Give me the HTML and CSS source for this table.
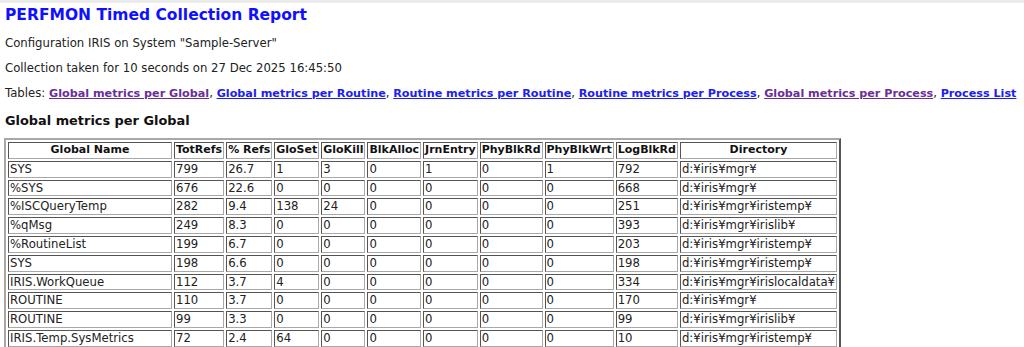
FILE: index.html
```html
<!DOCTYPE html>
<html>
<head>
<meta charset="utf-8">
<title>PERFMON Timed Collection Report</title>
<link rel="stylesheet" href="styles.css">
</head>
<body>
<div class="topbar"></div>
<div class="page">
<h1 class="title">PERFMON Timed Collection Report</h1>
<p class="line">Configuration IRIS on System "Sample-Server"</p>
<p class="line">Collection taken for 10 seconds on 27 Dec 2025 16:45:50</p>
<p class="line">Tables: <a class="lnk visited" href="#g">Global metrics per Global</a>, <a class="lnk" href="#gr">Global metrics per Routine</a>, <a class="lnk" href="#rr">Routine metrics per Routine</a>, <a class="lnk" href="#rp">Routine metrics per Process</a>, <a class="lnk visited" href="#gp">Global metrics per Process</a>, <a class="lnk" href="#pl">Process List</a></p>
<h2 class="section" id="g">Global metrics per Global</h2>
<table class="report">
<thead>
<tr><th class="c-name">Global Name</th><th>TotRefs</th><th>% Refs</th><th>GloSet</th><th>GloKill</th><th>BlkAlloc</th><th>JrnEntry</th><th>PhyBlkRd</th><th>PhyBlkWrt</th><th>LogBlkRd</th><th>Directory</th></tr>
</thead>
<tbody>
<tr><td>SYS</td><td>799</td><td>26.7</td><td>1</td><td>3</td><td>0</td><td>1</td><td>0</td><td>1</td><td>792</td><td>d:¥iris¥mgr¥</td></tr>
<tr><td>%SYS</td><td>676</td><td>22.6</td><td>0</td><td>0</td><td>0</td><td>0</td><td>0</td><td>0</td><td>668</td><td>d:¥iris¥mgr¥</td></tr>
<tr><td>%ISCQueryTemp</td><td>282</td><td>9.4</td><td>138</td><td>24</td><td>0</td><td>0</td><td>0</td><td>0</td><td>251</td><td>d:¥iris¥mgr¥iristemp¥</td></tr>
<tr><td>%qMsg</td><td>249</td><td>8.3</td><td>0</td><td>0</td><td>0</td><td>0</td><td>0</td><td>0</td><td>393</td><td>d:¥iris¥mgr¥irislib¥</td></tr>
<tr><td>%RoutineList</td><td>199</td><td>6.7</td><td>0</td><td>0</td><td>0</td><td>0</td><td>0</td><td>0</td><td>203</td><td>d:¥iris¥mgr¥iristemp¥</td></tr>
<tr><td>SYS</td><td>198</td><td>6.6</td><td>0</td><td>0</td><td>0</td><td>0</td><td>0</td><td>0</td><td>198</td><td>d:¥iris¥mgr¥iristemp¥</td></tr>
<tr><td>IRIS.WorkQueue</td><td>112</td><td>3.7</td><td>4</td><td>0</td><td>0</td><td>0</td><td>0</td><td>0</td><td>334</td><td>d:¥iris¥mgr¥irislocaldata¥</td></tr>
<tr><td>ROUTINE</td><td>110</td><td>3.7</td><td>0</td><td>0</td><td>0</td><td>0</td><td>0</td><td>0</td><td>170</td><td>d:¥iris¥mgr¥</td></tr>
<tr><td>ROUTINE</td><td>99</td><td>3.3</td><td>0</td><td>0</td><td>0</td><td>0</td><td>0</td><td>0</td><td>99</td><td>d:¥iris¥mgr¥irislib¥</td></tr>
<tr><td>IRIS.Temp.SysMetrics</td><td>72</td><td>2.4</td><td>64</td><td>0</td><td>0</td><td>0</td><td>0</td><td>0</td><td>10</td><td>d:¥iris¥mgr¥iristemp¥</td></tr>
</tbody>
</table>
</div>
</body>
</html>
```

FILE: styles.css
```css
html, body {
  margin: 0;
  padding: 0;
  background: #ffffff;
}
body {
  font-family: "DejaVu Sans", Verdana, sans-serif;
  font-size: 11.7px;
  color: #222222;
}
.topbar {
  height: 3px;
  background: #ececec;
}
.page {
  padding: 0 5px;
}
.title {
  margin: 3px 0 0 0;
  font-size: 15.5px;
  line-height: 19px;
  font-weight: bold;
  color: #1010ff;
}
.line {
  margin: 11px 0 0 0;
  line-height: 14px;
}
.lnk {
  font-size: 11.2px;
  font-weight: bold;
  color: #2020ee;
  text-decoration: underline;
}
.lnk.visited {
  color: #6a2e98;
}
.section {
  margin: 12px 0 0 0;
  font-size: 12.9px;
  line-height: 15px;
  font-weight: bold;
  color: #111111;
}
.report {
  margin: 10px 0 0 -1px;
  border: 2px outset #a8a8a8;
  border-spacing: 2px;
  border-collapse: separate;
}
.report th, .report td {
  border: 1px inset #a8a8a8;
  padding: 0 1px;
  height: 14.8px;
  line-height: 14.8px;
  white-space: nowrap;
  text-align: left;
}
.report th {
  font-size: 11px;
  text-align: center;
  font-weight: bold;
  color: #111111;
}
.c-name { width: 160px; }
```
